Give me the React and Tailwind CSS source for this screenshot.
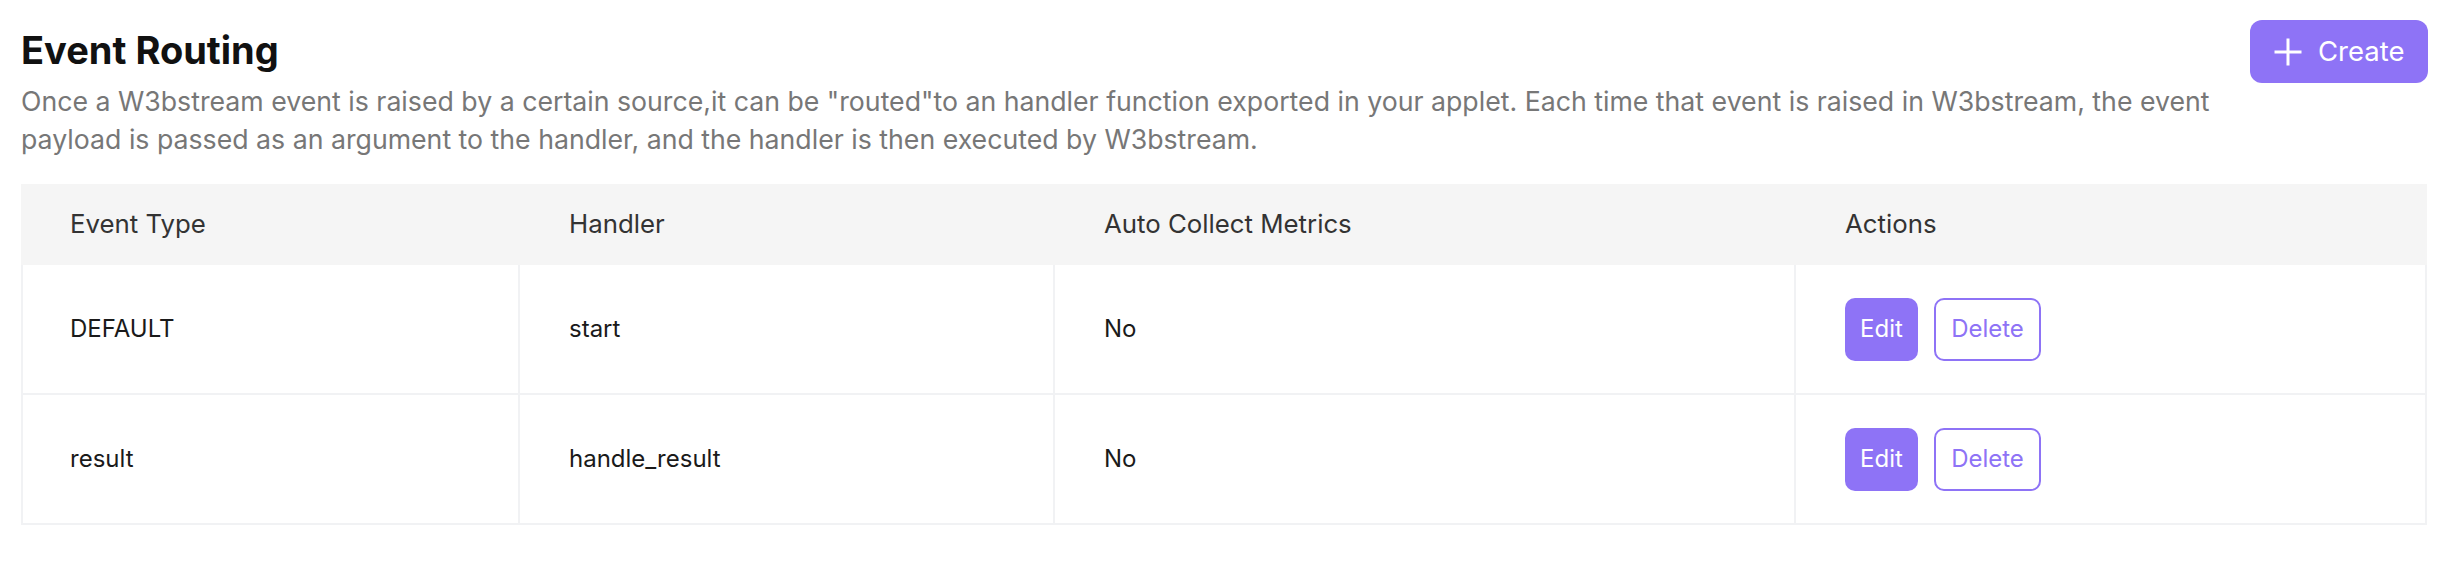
import React from "react";

const rows = [
  { type: "DEFAULT", handler: "start", metrics: "No" },
  { type: "result", handler: "handle_result", metrics: "No" },
];

function PlusIcon() {
  return (
    <svg width="28" height="28" viewBox="0 0 28 28" fill="none" stroke="currentColor" strokeWidth="3">
      <path d="M14 0.5V27.5M0.5 14H27.5" />
    </svg>
  );
}

export default function App() {
  return (
    <div className="min-h-screen bg-white pl-[21px] pr-[26px] pt-[20px] font-['Inter',sans-serif]">
      <div className="flex items-start justify-between">
        <div className="pt-[8px] pr-[8px]">
          <h1 className="text-[38px] leading-[45px] font-bold text-[#111111]">Event Routing</h1>
          <p className="mt-[10px] text-[26.7px] leading-[37.5px] text-[#777777]">
            Once a W3bstream event is raised by a certain source,it can be "routed"to an handler function exported in your applet. Each time that event is raised in W3bstream, the event payload is passed as an argument to the handler, and the handler is then executed by W3bstream.
          </p>
        </div>
        <button className="flex h-[63px] w-[178px] shrink-0 items-center gap-[16px] rounded-[12px] bg-[#8e73f6] pl-[24px] text-[27.5px] text-white">
          <PlusIcon />
          Create
        </button>
      </div>

      <div className="mt-[26px] w-[2406px]">
        <div className="flex h-[81px] items-center bg-[#f5f5f5] text-[25.8px] text-[#333333]">
          <div className="w-[499px] pl-[49px]">Event Type</div>
          <div className="w-[535px] pl-[49px]">Handler</div>
          <div className="w-[741px] pl-[49px]">Auto Collect Metrics</div>
          <div className="flex-1 pl-[49px]">Actions</div>
        </div>
        {rows.map((r) => (
          <div key={r.type} className="flex h-[130px] border-x-2 border-b-2 border-[#f1f2f4] text-[24px] text-[#1a1a1a]">
            <div className="flex w-[497px] items-center border-r-2 border-[#f1f2f4] pl-[47px]">{r.type}</div>
            <div className="flex w-[535px] items-center border-r-2 border-[#f1f2f4] pl-[49px]">{r.handler}</div>
            <div className="flex w-[741px] items-center border-r-2 border-[#f1f2f4] pl-[49px]">{r.metrics}</div>
            <div className="flex flex-1 items-center gap-[16px] pl-[49px]">
              <button className="h-[63px] w-[73px] rounded-[10px] bg-[#8e73f6] text-[24px] text-white">Edit</button>
              <button className="h-[63px] w-[107px] rounded-[10px] border-2 border-[#8e73f6] bg-white text-[24px] text-[#8e73f6]">Delete</button>
            </div>
          </div>
        ))}
      </div>
    </div>
  );
}
